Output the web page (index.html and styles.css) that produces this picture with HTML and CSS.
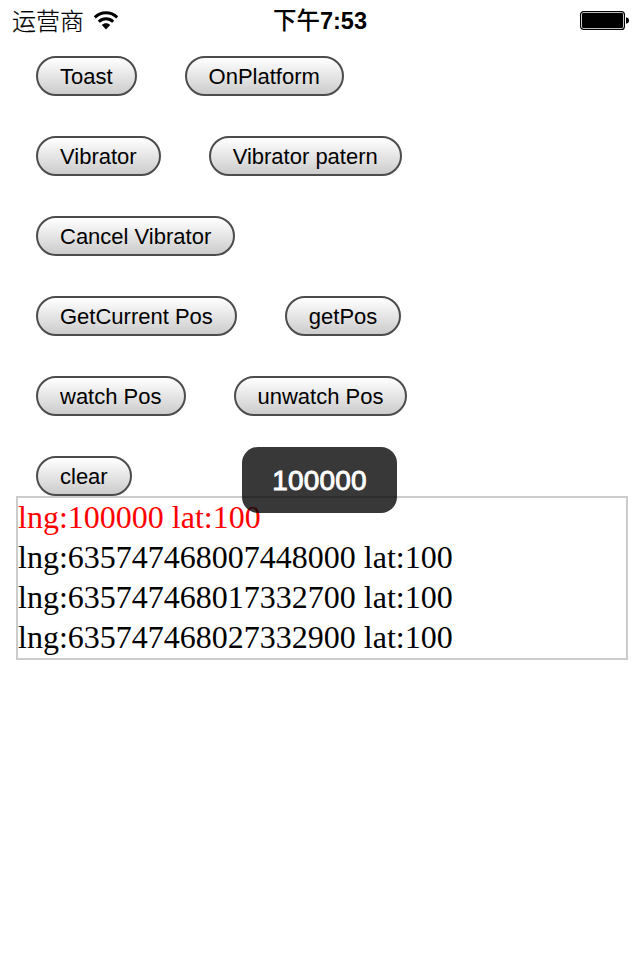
FILE: index.html
```html
<!DOCTYPE html>
<html lang="zh-CN">
<head>
<meta charset="utf-8">
<title>Demo</title>
<link rel="stylesheet" href="styles.css">
</head>
<body>
<header class="status">
  <div class="carrier"><span class="carrier-name">运营商</span>
    <svg class="wifi" width="26" height="20" viewBox="0 0 26 20" fill="none" stroke="#000" stroke-width="2.9">
      <path d="M1.8 6.4C8.2 .2 17.8 .2 24.2 6.4"/>
      <path d="M5.8 10.7C10 6.8 16 6.8 20.2 10.7"/>
      <path d="M8.8 14C11.2 11.6 14.8 11.6 17.2 14L13 18.6Z" fill="#000" stroke="none"/>
    </svg>
  </div>
  <div class="time"><span class="time-cjk">下午</span>7:53</div>
  <svg class="battery" width="50" height="20" viewBox="0 0 50 20">
    <rect x=".6" y=".6" width="43.8" height="17.8" rx="3" fill="#fff" stroke="#000" stroke-width="1.2"/>
    <rect x="2" y="2" width="41" height="15" rx="1.2"/>
    <path d="M46 6.2Q49 6.8 49 9.5T46 12.8Z"/>
  </svg>
</header>
<main class="page">
  <div class="row"><button class="btn">Toast</button><button class="btn">OnPlatform</button></div>
  <div class="row"><button class="btn">Vibrator</button><button class="btn">Vibrator patern</button></div>
  <div class="row"><button class="btn">Cancel Vibrator</button></div>
  <div class="row"><button class="btn">GetCurrent Pos</button><button class="btn">getPos</button></div>
  <div class="row"><button class="btn">watch Pos</button><button class="btn">unwatch Pos</button></div>
  <div class="row"><button class="btn">clear</button></div>
  <div class="log">
    <div class="latest">lng:100000 lat:100</div>
    <div>lng:635747468007448000 lat:100</div>
    <div>lng:635747468017332700 lat:100</div>
    <div>lng:635747468027332900 lat:100</div>
  </div>
</main>
<div class="toast">100000</div>
</body>
</html>
```
FILE: styles.css
```css
* { box-sizing: border-box; }
body {
  margin: 0;
  min-height: 960px;
  background: #fff;
  color: #000;
  position: relative;
}
.status {
  height: 40px;
  padding: 0 10px 0 12px;
  display: grid;
  grid-template-columns: 1fr auto 1fr;
  align-items: center;
  font-family: "Liberation Sans", "Noto Sans CJK SC", sans-serif;
}
.carrier { display: flex; align-items: center; gap: 9px; }
.carrier-name { font: 300 24px/38px "Noto Sans CJK SC", sans-serif; margin-bottom: 2px; -webkit-text-stroke: .2px #000; }
.time { font-size: 23.5px; font-weight: 700; line-height: 38px; margin: 0 2px 2px 0; }
.time-cjk { font-family: "Noto Sans CJK SC", sans-serif; font-weight: 500; }
.battery { justify-self: end; }
.page { padding: 16px 12px 0 16px; }
.row { display: flex; gap: 48px; padding-left: 20px; margin-bottom: 40px; }
.row:nth-child(6) { margin-bottom: 0; }
.btn {
  height: 40px;
  padding: 2px 22px 0;
  border: 2px solid #4c4c4c;
  border-radius: 20px;
  background: linear-gradient(#fff, #ccc);
  color: #000;
  font: 22px/34px "Liberation Sans", Arial, sans-serif;
  white-space: nowrap;
}
.log {
  height: 164px;
  border: 2px solid #ccc;
  font: 32px/40px "Liberation Serif", "Times New Roman", serif;
}
.log div { height: 40px; line-height: 38px; }
.log .latest { color: #f00; }
.toast {
  position: absolute;
  left: 242px;
  top: 447px;
  width: 155px;
  height: 66px;
  border-radius: 16px;
  background: rgba(0, 0, 0, .78);
  color: #fff;
  text-align: center;
  font: 28px/68px "Liberation Sans", Arial, sans-serif;
  letter-spacing: .2px;
  -webkit-text-stroke: .9px #fff;
}
```
